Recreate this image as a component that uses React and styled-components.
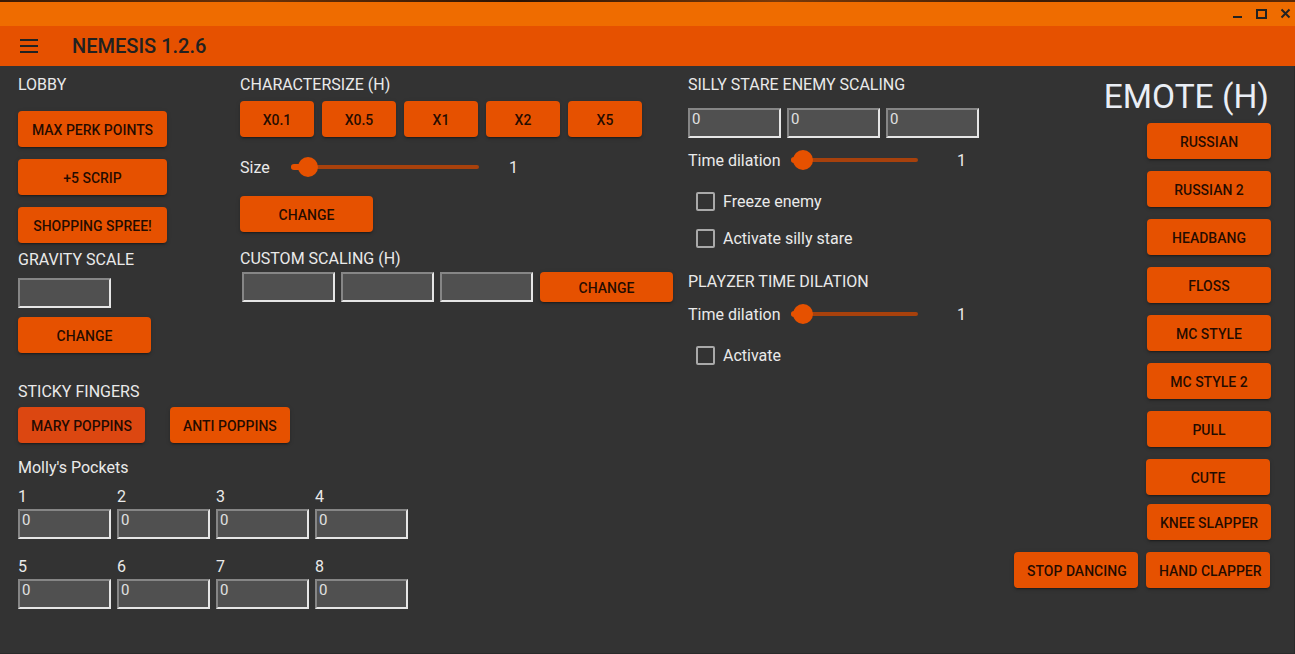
import React from "react";
import styled, { createGlobalStyle } from "styled-components";

const GlobalStyle = createGlobalStyle`
  html, body {
    margin: 0;
    padding: 0;
    background: #333333;
    font-family: Roboto, "Liberation Sans", sans-serif;
  }
  * { box-sizing: border-box; }
`;

const Window = styled.div`
  display: flex;
  flex-direction: column;
  height: 100vh;
  overflow: hidden;
`;

const Wallpaper = styled.div`
  height: 2px;
  background: linear-gradient(90deg, #3a1a05, #6b3208 20%, #2a1304 40%, #7a3a0a 60%, #3b1c06 80%, #5a2a08);
`;

const TitleBar = styled.div`
  height: 24px;
  background: #ef6c00;
  display: flex;
  justify-content: flex-end;
  align-items: stretch;
`;

const AppBar = styled.header`
  height: 40px;
  background: #e65100;
  display: flex;
  align-items: center;
  padding-left: 20px;
`;

const AppTitle = styled.h1`
  margin: 0 0 0 34px;
  font-size: 20px;
  font-weight: 500;
  color: #212121;
`;

const Body = styled.main`
  flex: 1;
  display: flex;
  padding: 7px 23px 0 18px;
  border-left: 1px solid #2a2a2a;
  border-right: 1px solid #2a2a2a;
  border-bottom: 1px solid #2a2a2a;
  margin-left: -1px;
`;

const Column = styled.section`
  display: flex;
  flex-direction: column;
  align-items: ${(p) => (p.$right ? "flex-end" : "flex-start")};
  width: ${(p) => (p.$w ? p.$w + "px" : "auto")};
  flex: ${(p) => (p.$grow ? 1 : "none")};
`;

const Label = styled.div`
  margin-top: ${(p) => p.$mt || 0}px;
  font-size: 16px;
  line-height: 24px;
  color: #eaeaea;
`;

const Heading = styled.h2`
  margin: 3px 2px 5px 0;
  font-size: 33.5px;
  font-weight: 400;
  line-height: 42px;
  color: #eaeef5;
`;

const Button = styled.button`
  height: ${(p) => p.$h || 36}px;
  width: ${(p) => (p.$w ? p.$w + "px" : "auto")};
  margin-top: ${(p) => p.$mt || 0}px;
  margin-right: ${(p) => p.$nudge || 0}px;
  padding: 1px 13px 0;
  border: none;
  border-radius: 4px;
  background: ${(p) => (p.$active ? "#dc4711" : "#e65100")};
  color: rgba(0, 0, 0, 0.85);
  font-family: Roboto, "Liberation Sans", sans-serif;
  font-size: 14px;
  font-weight: 500;
  text-transform: uppercase;
  white-space: nowrap;
  box-shadow: 0 3px 1px -2px rgba(0, 0, 0, 0.2), 0 2px 2px 0 rgba(0, 0, 0, 0.14),
    0 1px 5px 0 rgba(0, 0, 0, 0.12);
  cursor: pointer;
`;

const Stack = styled.div`
  display: flex;
  flex-direction: column;
  align-items: ${(p) => (p.$right ? "flex-end" : "flex-start")};
  gap: ${(p) => p.$gap || 0}px;
  margin-top: ${(p) => p.$mt || 0}px;
`;

const Row = styled.div`
  display: flex;
  align-items: center;
  gap: ${(p) => p.$gap || 0}px;
  margin-top: ${(p) => p.$mt || 0}px;
  margin-left: ${(p) => p.$ml || 0}px;
`;

const Field = styled.input`
  width: ${(p) => p.$w || 93}px;
  height: 30px;
  margin-top: ${(p) => p.$mt || 0}px;
  padding: 0 2px 8px;
  border: 2px solid;
  border-color: #868686 #e6e6e6 #e6e6e6 #868686;
  background: #505050;
  color: #e0e0e0;
  font-family: Roboto, "Liberation Sans", sans-serif;
  font-size: 15px;
  outline: none;
`;

const PocketGrid = styled.div`
  display: grid;
  grid-template-columns: repeat(4, 93px);
  column-gap: 6px;
  row-gap: 16px;
  margin-top: ${(p) => p.$mt || 0}px;
`;

const SliderRow = styled.div`
  display: flex;
  align-items: center;
  height: 24px;
  margin-top: ${(p) => p.$mt || 0}px;
`;

const SliderLabel = styled.span`
  width: ${(p) => p.$w}px;
  font-size: 16px;
  color: #eaeaea;
`;

const Track = styled.div`
  position: relative;
  width: ${(p) => p.$w}px;
  height: 4px;
  border-radius: 2px;
  background: #a8410c;
`;

const TrackFill = styled.div`
  position: absolute;
  left: 0;
  top: -1px;
  height: 6px;
  border-radius: 3px;
  background: #e65100;
`;

const Thumb = styled.div`
  position: absolute;
  top: 50%;
  width: 20px;
  height: 20px;
  border-radius: 50%;
  background: #e65100;
  transform: translate(-50%, -50%);
`;

const SliderValue = styled.span`
  margin-left: ${(p) => p.$gap}px;
  font-size: 16px;
  color: #eaeaea;
`;

const CheckRow = styled.label`
  display: flex;
  align-items: center;
  height: 37px;
  padding-left: 8px;
  font-size: 16px;
  color: #eaeaea;
`;

const CheckBox = styled.span`
  width: 19px;
  height: 19px;
  margin-right: 8px;
  border: 2px solid #a9a9a9;
  border-radius: 2px;
`;

function Slider({ label, labelWidth, width, pct, gap, mt }) {
  return (
    <SliderRow $mt={mt}>
      <SliderLabel $w={labelWidth}>{label}</SliderLabel>
      <Track $w={width}>
        <TrackFill style={{ width: pct + "%" }} />
        <Thumb style={{ left: pct + "%" }} />
      </Track>
      <SliderValue $gap={gap}>1</SliderValue>
    </SliderRow>
  );
}

function Check({ children }) {
  return (
    <CheckRow>
      <CheckBox />
      {children}
    </CheckRow>
  );
}

function WindowControls() {
  return (
    <svg width="65" height="24" viewBox="0 0 65 24">
      <rect x="3" y="14" width="9" height="2" fill="#222" />
      <rect x="27" y="8" width="9" height="8" fill="none" stroke="#222" strokeWidth="2" />
      <path d="M51.5 7.5 L59.5 15.5 M59.5 7.5 L51.5 15.5" stroke="#222" strokeWidth="2" />
    </svg>
  );
}

function MenuIcon() {
  return (
    <svg width="18" height="14" viewBox="0 0 18 14">
      <rect x="0" y="0" width="18" height="2" fill="#222" />
      <rect x="0" y="6" width="18" height="2" fill="#222" />
      <rect x="0" y="12" width="18" height="2" fill="#222" />
    </svg>
  );
}

const sizes = ["X0.1", "X0.5", "X1", "X2", "X5"];
const emotes = ["Russian", "Russian 2", "Headbang", "Floss", "MC Style", "MC Style 2", "Pull"];
const pct = ((1 - 0.1) / 9.9) * 100;

export default function App() {
  return (
    <>
      <GlobalStyle />
      <Window>
        <Wallpaper />
        <TitleBar>
          <WindowControls />
        </TitleBar>
        <AppBar>
          <MenuIcon />
          <AppTitle>NEMESIS 1.2.6</AppTitle>
        </AppBar>
        <Body>
          <Column $w={222}>
            <Label>LOBBY</Label>
            <Stack $gap={12} $mt={14}>
              <Button $w={149}>Max perk points</Button>
              <Button $w={149}>+5 Scrip</Button>
              <Button $w={149}>Shopping spree!</Button>
            </Stack>
            <Label $mt={5}>GRAVITY SCALE</Label>
            <Field $mt={6} />
            <Button $w={133} $mt={9}>Change</Button>
            <Label $mt={27}>STICKY FINGERS</Label>
            <Row $gap={25} $mt={3}>
              <Button $active>Mary poppins</Button>
              <Button>Anti poppins</Button>
            </Row>
            <Label $mt={13}>Molly's Pockets</Label>
            <PocketGrid $mt={5}>
              {[1, 2, 3, 4, 5, 6, 7, 8].map((n) => (
                <div key={n}>
                  <Label>{n}</Label>
                  <Field defaultValue="0" />
                </div>
              ))}
            </PocketGrid>
          </Column>

          <Column $w={448}>
            <Label>CHARACTERSIZE (H)</Label>
            <Row $gap={8} $mt={4}>
              {sizes.map((s) => (
                <Button key={s} $w={74}>{s}</Button>
              ))}
            </Row>
            <Slider label="Size" labelWidth={51} width={188} pct={pct} gap={30} mt={18} />
            <Button $w={133} $mt={17}>Change</Button>
            <Label $mt={15}>CUSTOM SCALING (H)</Label>
            <Row $gap={6} $mt={1} $ml={2}>
              <Field />
              <Field />
              <Field />
              <Button $w={133} $h={30} style={{ marginLeft: 1 }}>Change</Button>
            </Row>
          </Column>

          <Column $grow>
            <Label>SILLY STARE ENEMY SCALING</Label>
            <Row $gap={6} $mt={11}>
              <Field defaultValue="0" />
              <Field defaultValue="0" />
              <Field defaultValue="0" />
            </Row>
            <Slider label="Time dilation" labelWidth={103} width={127} pct={pct} gap={39} mt={10} />
            <Stack $mt={11}>
              <Check>Freeze enemy</Check>
              <Check>Activate silly stare</Check>
            </Stack>
            <Label $mt={13}>PLAYZER TIME DILATION</Label>
            <Slider label="Time dilation" labelWidth={103} width={127} pct={pct} gap={39} mt={8} />
            <Stack $mt={11}>
              <Check>Activate</Check>
            </Stack>
          </Column>

          <Column $right>
            <Heading>EMOTE (H)</Heading>
            <Stack $right $gap={12}>
              {emotes.map((e) => (
                <Button key={e} $w={124}>{e}</Button>
              ))}
              <Button $w={124} $nudge={1}>Cute</Button>
            </Stack>
            <Stack $right $mt={9}>
              <Button $w={124}>Knee slapper</Button>
            </Stack>
            <Row $gap={8} $mt={12}>
              <Button $w={124}>Stop dancing</Button>
              <Button $w={124} $nudge={1}>Hand clapper</Button>
            </Row>
          </Column>
        </Body>
      </Window>
    </>
  );
}
